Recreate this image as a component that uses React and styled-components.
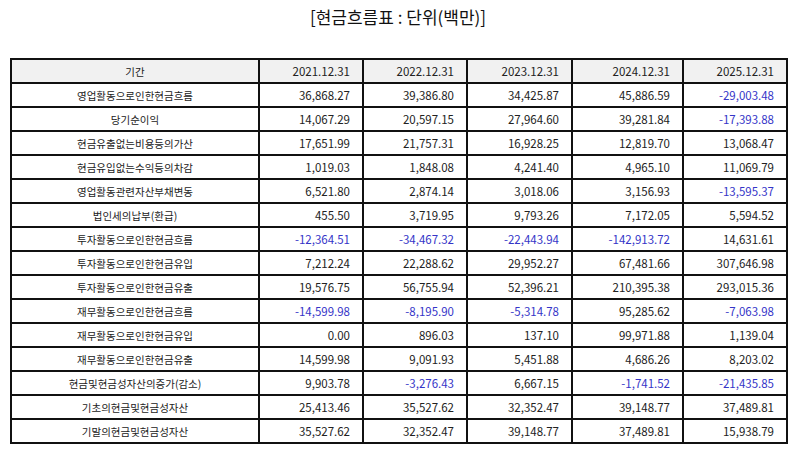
import React from 'react'
import styled, { createGlobalStyle } from 'styled-components'

const GlobalStyle = createGlobalStyle`
  html, body {
    margin: 0;
    padding: 0;
    background: #ffffff;
  }
  body {
    font-family: "Noto Sans CJK KR", "Noto Sans", sans-serif;
    color: #222222;
  }
`

const Page = styled.div`
  width: 794px;
  height: 452px;
  padding: 0 8px 0 10px;
  box-sizing: border-box;
  overflow: hidden;
`

const Title = styled.div`
  text-align: center;
  font-size: 17px;
  line-height: 22px;
  padding-top: 6px;
  height: 58px;
  box-sizing: border-box;
  color: #111111;
`

const Table = styled.table`
  border-collapse: collapse;
  table-layout: fixed;
  width: 776px;
`

const Th = styled.th`
  height: 22px;
  padding: 0 12px;
  border: 2px solid #111111;
  background: #f1f1f1;
  font-weight: normal;
  font-size: ${(p) => (p.$label ? '10.5px' : '11.5px')};
  text-align: ${(p) => (p.$label ? 'center' : 'right')};
  color: #222222;
`

const Td = styled.td`
  height: 22px;
  padding: 0 12px;
  border: 2px solid #111111;
  font-size: ${(p) => (p.$label ? '10.5px' : '11.5px')};
  text-align: ${(p) => (p.$label ? 'center' : 'right')};
  color: ${(p) => (p.$neg ? '#3535c8' : '#222222')};
  white-space: nowrap;
`

const years = ['2021.12.31', '2022.12.31', '2023.12.31', '2024.12.31', '2025.12.31']
const widths = [248, 104, 104, 105, 111, 104]

const rows = [
  ['영업활동으로인한현금흐름', '36,868.27', '39,386.80', '34,425.87', '45,886.59', '-29,003.48'],
  ['당기순이익', '14,067.29', '20,597.15', '27,964.60', '39,281.84', '-17,393.88'],
  ['현금유출없는비용등의가산', '17,651.99', '21,757.31', '16,928.25', '12,819.70', '13,068.47'],
  ['현금유입없는수익등의차감', '1,019.03', '1,848.08', '4,241.40', '4,965.10', '11,069.79'],
  ['영업활동관련자산부채변동', '6,521.80', '2,874.14', '3,018.06', '3,156.93', '-13,595.37'],
  ['법인세의납부(환급)', '455.50', '3,719.95', '9,793.26', '7,172.05', '5,594.52'],
  ['투자활동으로인한현금흐름', '-12,364.51', '-34,467.32', '-22,443.94', '-142,913.72', '14,631.61'],
  ['투자활동으로인한현금유입', '7,212.24', '22,288.62', '29,952.27', '67,481.66', '307,646.98'],
  ['투자활동으로인한현금유출', '19,576.75', '56,755.94', '52,396.21', '210,395.38', '293,015.36'],
  ['재무활동으로인한현금흐름', '-14,599.98', '-8,195.90', '-5,314.78', '95,285.62', '-7,063.98'],
  ['재무활동으로인한현금유입', '0.00', '896.03', '137.10', '99,971.88', '1,139.04'],
  ['재무활동으로인한현금유출', '14,599.98', '9,091.93', '5,451.88', '4,686.26', '8,203.02'],
  ['현금및현금성자산의증가(감소)', '9,903.78', '-3,276.43', '6,667.15', '-1,741.52', '-21,435.85'],
  ['기초의현금및현금성자산', '25,413.46', '35,527.62', '32,352.47', '39,148.77', '37,489.81'],
  ['기말의현금및현금성자산', '35,527.62', '32,352.47', '39,148.77', '37,489.81', '15,938.79']
]

const App = () => {
  return (
    <Page>
      <GlobalStyle />
      <Title>[현금흐름표 : 단위(백만)]</Title>
      <Table>
        <colgroup>
          {widths.map((w, i) => <col key={i} style={{ width: w }} />)}
        </colgroup>
        <thead>
          <tr>
            <Th $label>기간</Th>
            {years.map(y => <Th key={y}>{y}</Th>)}
          </tr>
        </thead>
        <tbody>
          {rows.map(r => (
            <tr key={r[0]}>
              <Td $label>{r[0]}</Td>
              {r.slice(1).map((v, i) => (
                <Td key={i} $neg={v.startsWith('-')}>{v}</Td>
              ))}
            </tr>
          ))}
        </tbody>
      </Table>
    </Page>
  )
}

export default App
